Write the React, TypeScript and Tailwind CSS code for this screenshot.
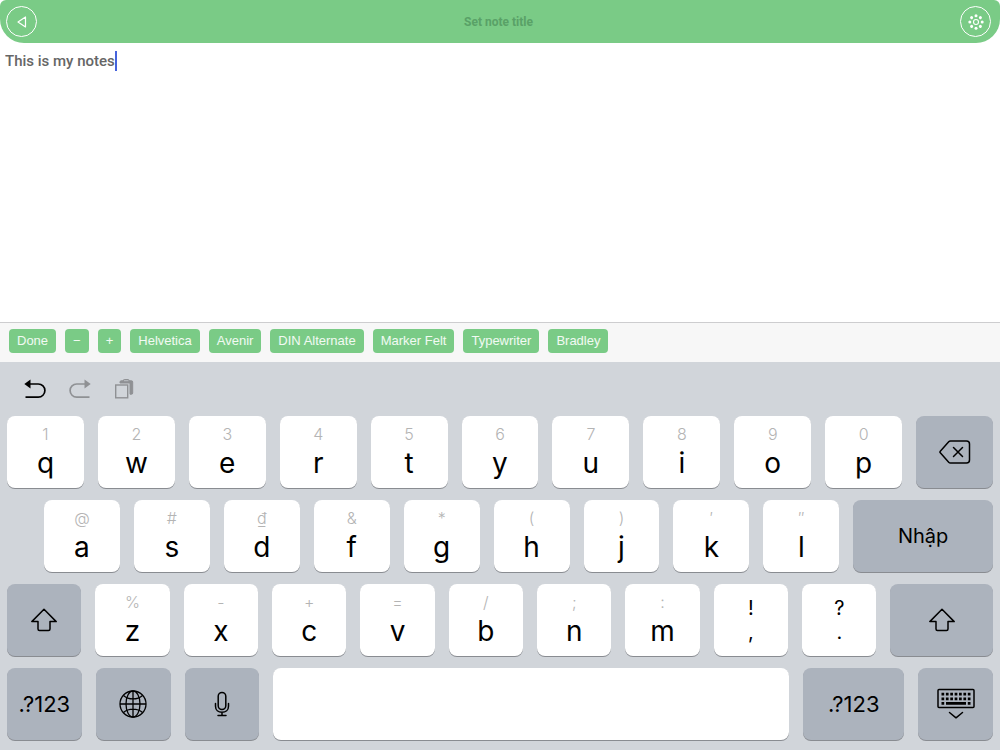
import { useState } from "react";
import type { ReactNode } from "react";

const fontButtons = ["Done", "−", "+", "Helvetica", "Avenir", "DIN Alternate", "Marker Felt", "Typewriter", "Bradley"];

const topRow = [["1", "q"], ["2", "w"], ["3", "e"], ["4", "r"], ["5", "t"], ["6", "y"], ["7", "u"], ["8", "i"], ["9", "o"], ["0", "p"]];
const middleRow = [["@", "a"], ["#", "s"], ["₫", "d"], ["&", "f"], ["*", "g"], ["(", "h"], [")", "j"], ["′", "k"], ["″", "l"]];
const bottomRow = [["%", "z"], ["-", "x"], ["+", "c"], ["=", "v"], ["/", "b"], [";", "n"], [":", "m"]];

function LetterKey({ hint, letter }: { hint: string; letter: string }) {
    return (
        <button className="flex h-18 min-w-0 flex-1 flex-col items-center gap-px rounded-lg bg-white pt-2 text-black shadow-[0_1px_0_#898c91]">
            <span className="text-base leading-5 font-light text-[#b4b4b4]">{hint}</span>
            <span className="text-[28px] leading-9">{letter}</span>
        </button>
    );
}

function PunctuationKey({ top, bottom }: { top: string; bottom: string }) {
    return (
        <button className="flex h-18 min-w-0 flex-1 flex-col items-center rounded-lg bg-white pt-3 text-xl leading-6 text-black shadow-[0_1px_0_#898c91]">
            <span>{top}</span>
            <span>{bottom}</span>
        </button>
    );
}

function GreyKey({ label, size, children }: { label?: string; size: string; children: ReactNode }) {
    return (
        <button
            aria-label={label}
            className={`flex h-18 min-w-0 basis-0 items-center justify-center rounded-lg bg-[#acb3bd] text-black shadow-[0_1px_0_#898c91] ${size}`}
        >
            {children}
        </button>
    );
}

function ShiftIcon() {
    return (
        <svg width="28" height="24" viewBox="0 0 28 24" fill="none" stroke="currentColor" strokeWidth="1.5" strokeLinejoin="round">
            <path d="M14 1.2 26.2 13.6H20V21a1.5 1.5 0 0 1-1.5 1.5h-9A1.5 1.5 0 0 1 8 21v-7.4H1.8Z" />
        </svg>
    );
}

function DeleteIcon() {
    return (
        <svg width="32" height="24" viewBox="0 0 32 24" fill="none" stroke="currentColor" strokeWidth="1.5" strokeLinecap="round" strokeLinejoin="round">
            <path d="M11.5 1h16a3 3 0 0 1 3 3v16a3 3 0 0 1-3 3h-16a2.5 2.5 0 0 1-1.8-.8l-8.4-9.4a1.2 1.2 0 0 1 0-1.6l8.4-9.4A2.5 2.5 0 0 1 11.5 1Z" />
            <path d="m14.5 7.5 9 9m0-9-9 9" />
        </svg>
    );
}

function GlobeIcon() {
    return (
        <svg width="28" height="28" viewBox="0 0 28 28" fill="none" stroke="currentColor" strokeWidth="1.3">
            <circle cx="14" cy="14" r="13" />
            <ellipse cx="14" cy="14" rx="7" ry="13" />
            <path d="M14 1v26M1 14h26M4.5 5.5c5 4.6 14 4.6 19 0M4.5 22.5c5-4.6 14-4.6 19 0" />
        </svg>
    );
}

function MicIcon() {
    return (
        <svg width="16" height="26" viewBox="0 0 16 26" fill="none" stroke="currentColor" strokeWidth="1.5" strokeLinecap="round">
            <rect x="4.2" y="1.5" width="7.6" height="17" rx="3.8" />
            <path d="M1.5 12.5v2.8c0 3.7 2.8 6 6.5 6s6.5-2.3 6.5-6v-2.8M8 21.5v3M4 24.6h8" />
        </svg>
    );
}

function KeyboardIcon() {
    return (
        <svg width="38" height="32" viewBox="0 0 38 32" fill="none" stroke="currentColor">
            <rect x="1" y="1.5" width="36" height="18" rx="1" strokeWidth="1.5" />
            <path d="M4.5 6.2h29M4.5 10.8h29" strokeWidth="2.7" strokeDasharray="2.7 1.683" />
            <path d="M4.5 15.3h2.7M9 15.3h20M30.8 15.3h2.7" strokeWidth="2.7" />
            <path d="m12.5 24.5 6.5 5.3 6.5-5.3" strokeWidth="1.5" strokeLinecap="round" strokeLinejoin="round" />
        </svg>
    );
}

function UndoIcon() {
    return (
        <svg width="22" height="20" viewBox="0 0 22 20" fill="none" stroke="currentColor" strokeWidth="1.7">
            <path d="M4 5h10.3a6.6 6.6 0 0 1 0 13.2H1.5" />
            <path d="M.3 5 6.5.6v8.8Z" fill="currentColor" stroke="none" />
        </svg>
    );
}

export default function App() {
    const [title, setTitle] = useState("");
    const [note, setNote] = useState("This is my notes");

    return (
        <div className="flex min-h-screen flex-col bg-white font-['Inter',sans-serif]">
            {/* Title bar */}
            <header className="flex h-[43px] items-center justify-between rounded-t-md rounded-b-3xl bg-[#7acb86] pr-[9px] pl-[6px]">
                <button aria-label="Back" className="flex size-[31px] items-center justify-center rounded-full border border-white text-white">
                    <svg width="10" height="12" viewBox="0 0 10 12" fill="none" stroke="currentColor" strokeWidth="1.2" strokeLinejoin="round">
                        <path d="M1 6 8.5 1v10Z" />
                    </svg>
                </button>
                <input
                    aria-label="Note title"
                    placeholder="Set note title"
                    value={title}
                    onChange={(e) => setTitle(e.target.value)}
                    className="min-w-0 flex-1 text-center font-['Roboto',sans-serif] text-xs font-bold text-[#3d7146] outline-none placeholder:text-[#59a167]"
                />
                <button aria-label="Settings" className="flex size-[31px] items-center justify-center rounded-full border border-white text-white">
                    <svg width="16" height="16" viewBox="0 0 16 16" fill="currentColor">
                        <circle cx="8" cy="8" r="2.5" fill="none" stroke="currentColor" strokeWidth="1.1" />
                        {[0, 45, 90, 135, 180, 225, 270, 315].map((angle) => (
                            <circle key={angle} cx="8" cy="1.8" r="1.5" transform={`rotate(${angle} 8 8)`} />
                        ))}
                    </svg>
                </button>
            </header>

            {/* Note */}
            <main className="flex flex-1 items-start pt-2 pl-[5px]">
                <textarea
                    aria-label="Note"
                    value={note}
                    onChange={(e) => setNote(e.target.value)}
                    className="field-sizing-content resize-none overflow-hidden font-['Roboto',sans-serif] text-[15px] leading-5 font-medium text-[#666666] caret-transparent outline-none"
                />
                <span className="h-5 w-[2px] bg-[#4563dc]" />
            </main>

            {/* Font toolbar */}
            <div className="flex h-10 items-start gap-[9px] border-t border-[#cdcdcf] bg-[#f7f7f7] px-[9px] pt-[6px]">
                {fontButtons.map((name) => (
                    <button key={name} className="h-6 rounded-sm bg-[#7acb86] px-2 font-['Liberation_Sans',sans-serif] text-[13px] whitespace-nowrap text-white/90">
                        {name}
                    </button>
                ))}
            </div>

            {/* Keyboard */}
            <div className="bg-[#d1d5da] px-[7px] pb-[10px]">
                <div className="flex h-[54px] items-center gap-[23px] px-[17px]">
                    <button aria-label="Undo" className="text-black">
                        <UndoIcon />
                    </button>
                    <button aria-label="Redo" className="-scale-x-100 text-[#8f9194]">
                        <UndoIcon />
                    </button>
                    <button aria-label="Paste" className="text-[#8f9194]">
                        <svg width="20" height="20" viewBox="0 0 20 20" fill="none" stroke="currentColor">
                            <path d="M6 4V3a1.2 1.2 0 0 1 1.2-1.2h10.3A1.2 1.2 0 0 1 18.7 3v11a1.2 1.2 0 0 1-1.2 1.2H16V4Z" fill="currentColor" />
                            <path d="M9.5 2.8V1.2a.7.7 0 0 1 .7-.7h4a.7.7 0 0 1 .7.7v1.6Z" fill="#b4b7bb" />
                            <rect x="1.7" y="6" width="12" height="12.8" fill="#d1d5da" strokeWidth="1.4" />
                        </svg>
                    </button>
                </div>

                <div className="flex flex-col gap-3">
                    <div className="flex gap-3.5">
                        {topRow.map(([hint, letter]) => (
                            <LetterKey key={letter} hint={hint} letter={letter} />
                        ))}
                        <GreyKey label="Delete" size="grow">
                            <DeleteIcon />
                        </GreyKey>
                    </div>
                    <div className="flex gap-3.5 pl-[37px]">
                        {middleRow.map(([hint, letter]) => (
                            <LetterKey key={letter} hint={hint} letter={letter} />
                        ))}
                        <GreyKey size="grow-[1.84] text-xl">Nhập</GreyKey>
                    </div>
                    <div className="flex gap-3.5">
                        <GreyKey label="Left shift" size="grow">
                            <ShiftIcon />
                        </GreyKey>
                        {bottomRow.map(([hint, letter]) => (
                            <LetterKey key={letter} hint={hint} letter={letter} />
                        ))}
                        <PunctuationKey top="!" bottom="," />
                        <PunctuationKey top="?" bottom="." />
                        <GreyKey label="Right shift" size="grow-[1.38]">
                            <ShiftIcon />
                        </GreyKey>
                    </div>
                    <div className="flex gap-3.5">
                        <GreyKey size="grow text-[22px]">.?123</GreyKey>
                        <GreyKey label="Next keyboard" size="grow">
                            <GlobeIcon />
                        </GreyKey>
                        <GreyKey label="Dictate" size="grow">
                            <MicIcon />
                        </GreyKey>
                        <button aria-label="Space" className="h-18 min-w-0 grow-[6.9] basis-0 rounded-lg bg-white shadow-[0_1px_0_#898c91]" />
                        <GreyKey size="grow-[1.35] text-[22px]">.?123</GreyKey>
                        <GreyKey label="Hide keyboard" size="grow">
                            <KeyboardIcon />
                        </GreyKey>
                    </div>
                </div>
            </div>
        </div>
    );
}
